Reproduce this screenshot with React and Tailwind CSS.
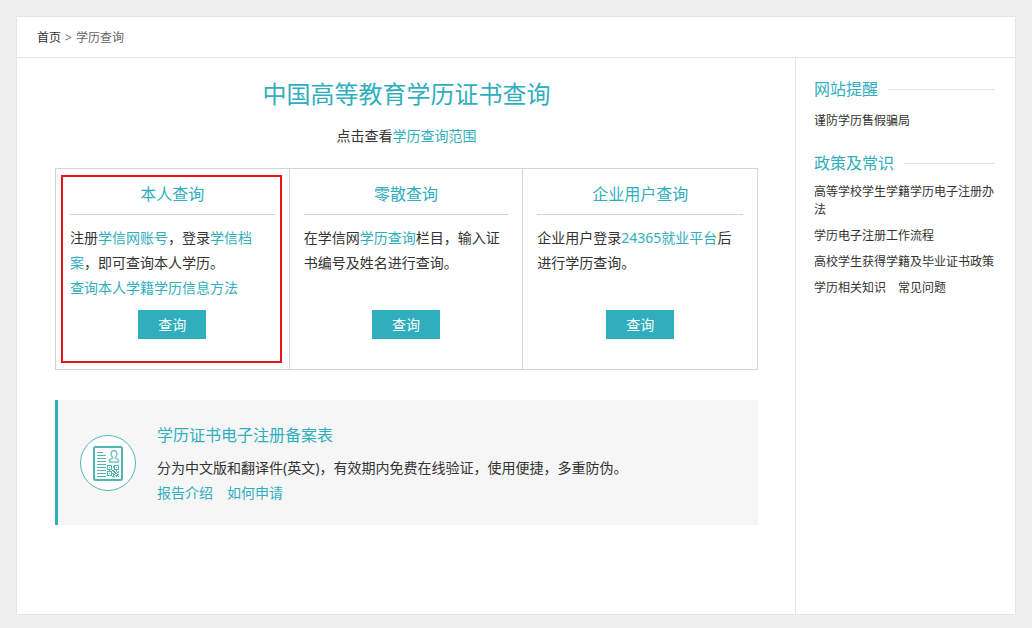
import React from "react";

const queries = [
  {
    title: "本人查询",
    active: true,
    content: (
      <>
        注册<Link>学信网账号</Link>，登录<Link>学信档案</Link>，即可查询本人学历。
        <br />
        <Link>查询本人学籍学历信息方法</Link>
      </>
    ),
  },
  {
    title: "零散查询",
    content: (
      <>
        在学信网<Link>学历查询</Link>栏目，输入证书编号及姓名进行查询。
      </>
    ),
  },
  {
    title: "企业用户查询",
    content: (
      <>
        企业用户登录<Link>24365就业平台</Link>后进行学历查询。
      </>
    ),
  },
];

// dark modules of the small QR code on the report icon
const qr = [
  "111110011111",
  "100010110001",
  "101010110101",
  "100010010001",
  "111110011111",
  "001001100100",
  "111110110101",
  "100010011011",
  "101011101100",
  "100010110011",
  "111110101110",
  "000001110101",
];

function Link({ children }) {
  return (
    <a href="#" className="text-[#30aebd]">
      {children}
    </a>
  );
}

function ReportIcon() {
  return (
    <svg viewBox="0 0 56 56" className="mt-3 w-14 h-14 shrink-0" fill="none" stroke="#4fb5b5">
      <circle cx="28" cy="28" r="27.5" fill="#fff" />
      <rect x="14" y="12" width="28" height="33" rx="1.5" strokeWidth="2" />
      <path d="M17 17.5h6M17 20.5h9M17 23.5h9M17 26.5h9M17 29.5h9M17 32.5h9M17 35.5h9M17 38.5h9M17 41.5h9" />
      <path
        d="M34 15.6c-1.8 0-2.9 1.3-2.9 3.2 0 1.5.6 2.8 1.5 3.5v.7c-1.6.5-3 1-3 2.6v1.4h8.8v-1.4c0-1.6-1.4-2.1-3-2.6v-.7c.9-.7 1.5-2 1.5-3.5 0-1.9-1.1-3.2-2.9-3.2z"
        strokeWidth="1.6"
        opacity=".75"
      />
      <g fill="#4fb5b5" stroke="none" shapeRendering="crispEdges">
        {qr.map((row, y) =>
          row
            .split("")
            .map((c, x) =>
              c === "1" ? <rect key={`${x}-${y}`} x={27 + x} y={30 + y} width="1" height="1" /> : null
            )
        )}
      </g>
    </svg>
  );
}

function SideTitle({ children }) {
  return (
    <h2 className="flex items-center gap-2.5 text-base leading-6 text-[#30aebd]">
      {children}
      <span className="flex-1 h-px bg-[#e4e4e4]"></span>
    </h2>
  );
}

const App = () => {
  return (
    <div className="min-h-screen flex flex-col bg-[#f0f0f0] px-4 pt-4 pb-[13px] text-sm text-[#333] font-['Noto_Sans','Noto_Sans_CJK_SC',sans-serif]">
      <div className="flex-1 flex flex-col bg-white border border-[#e4e4e4]">
        <nav className="flex gap-1 px-5 pt-0.5 text-xs leading-[38px] text-[#666] border-b border-[#e4e4e4]">
          <a href="#" className="text-[#333]">首页</a>
          <span>&gt;</span>
          <span>学历查询</span>
        </nav>
        <div className="flex-1 flex">
          <main className="flex-1 min-w-0 pt-5 pl-[38px] pr-[37px]">
            <h1 className="text-2xl leading-8 text-center text-[#30aebd]">中国高等教育学历证书查询</h1>
            <p className="mt-3.5 leading-6 text-center">
              点击查看<Link>学历查询范围</Link>
            </p>

            <div className="mt-5 grid grid-cols-3 divide-x divide-[#d5d5d5] border border-[#d5d5d5]">
              {queries.map((q) => (
                <section key={q.title} className="relative px-3.5 pt-[13px] pb-[30px] text-center">
                  <h2 className="pb-2 text-base leading-6 text-[#30aebd] border-b border-[#d5d5d5]">{q.title}</h2>
                  <p className="mt-2.5 min-h-[75px] leading-[25px] text-left">{q.content}</p>
                  <button className="mt-2.5 w-[68px] h-[29px] bg-[#30aebd] text-white cursor-pointer">查询</button>
                  {q.active && (
                    <div className="absolute left-[5px] right-[7px] inset-y-[6px] border-2 border-[#ee131b] pointer-events-none"></div>
                  )}
                </section>
              ))}
            </div>

            {/* report */}
            <div className="mt-[30px] flex items-start gap-[21px] pl-[22px] pt-[23px] pb-5 bg-[#f6f6f6] border-l-3 border-[#30aebd]">
              <ReportIcon />
              <div>
                <h2 className="text-base leading-6 text-[#30aebd]">学历证书电子注册备案表</h2>
                <p className="mt-2 leading-[25px]">
                  分为中文版和翻译件(英文)，有效期内免费在线验证，使用便捷，多重防伪。
                </p>
                <div className="flex gap-3.5 leading-[25px]">
                  <Link>报告介绍</Link>
                  <Link>如何申请</Link>
                </div>
              </div>
            </div>
          </main>

          <aside className="w-[220px] shrink-0 pt-[19px] pl-[18px] pr-5 border-l border-[#e4e4e4]">
            <SideTitle>网站提醒</SideTitle>
            <ul className="mt-[11px] text-xs leading-[18px]">
              <li><a href="#">谨防学历售假骗局</a></li>
            </ul>
            <div className="mt-[21px]">
              <SideTitle>政策及常识</SideTitle>
            </div>
            <ul className="mt-2 space-y-2 text-xs leading-[18px]">
              <li><a href="#">高等学校学生学籍学历电子注册办法</a></li>
              <li><a href="#">学历电子注册工作流程</a></li>
              <li><a href="#">高校学生获得学籍及毕业证书政策</a></li>
              <li className="flex gap-3">
                <a href="#">学历相关知识</a>
                <a href="#">常见问题</a>
              </li>
            </ul>
          </aside>
        </div>
      </div>
    </div>
  );
};

export default App;
